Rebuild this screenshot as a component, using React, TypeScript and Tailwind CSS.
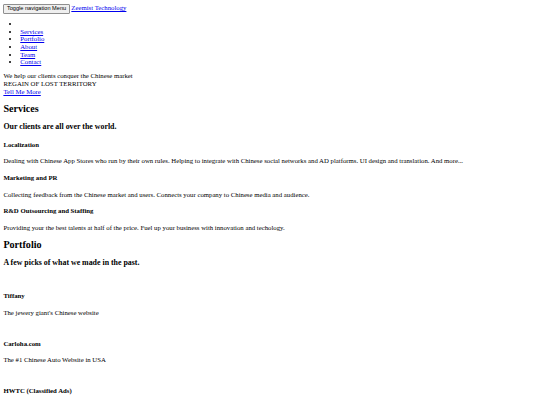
const navLinks = ["Services", "Portfolio", "About", "Team", "Contact"];

const services = [
  {
    title: "Localization",
    text: "Dealing with Chinese App Stores who run by their own rules. Helping to integrate with Chinese social networks and AD platforms. UI design and translation. And more...",
  },
  {
    title: "Marketing and PR",
    text: "Collecting feedback from the Chinese market and users. Connects your company to Chinese media and audience.",
  },
  {
    title: "R&D Outsourcing and Staffing",
    text: "Providing your the best talents at half of the price. Fuel up your business with innovation and techology.",
  },
];

const portfolio = [
  { title: "Tiffany", text: "The jewery giant's Chinese website" },
  { title: "Carloha.com", text: "The #1 Chinese Auto Website in USA" },
  { title: "HWTC (Classified Ads)", text: "" },
];

const linkCls = "text-[#0000ee] underline";

export default function App() {
  return (
    <div className="bg-white text-black font-['Liberation_Serif',serif] text-[6.75px] leading-[1.12] p-[3.375px]">
      {/* nav */}
      <nav>
        <div className="leading-[9px]">
          <button
            type="button"
            className="inline-block align-baseline bg-[#efefef] border border-[#8f8f8f] rounded-[1px] px-[2.5px] py-[0.8px] font-['Liberation_Sans',sans-serif] text-[5.625px] leading-[1.15] text-black"
          >
            Toggle navigation Menu
          </button>{" "}
          <a href="#" className={linkCls}>
            Zeemist Technology
          </a>
        </div>
        <ul className="list-disc pl-[2.5em] my-[1em]">
          <li>
            <a href="#"></a>
          </li>
          {navLinks.map((l) => (
            <li key={l}>
              <a href="#" className={linkCls}>
                {l}
              </a>
            </li>
          ))}
        </ul>
      </nav>

      {/* header */}
      <header>
        <div>We help our clients conquer the Chinese market</div>
        <div>REGAIN OF LOST TERRITORY</div>
        <a href="#" className={linkCls}>
          Tell Me More
        </a>
      </header>

      {/* services */}
      <section>
        <h2 className="text-[1.5em] font-bold my-[0.83em]">Services</h2>
        <h3 className="text-[1.17em] font-bold my-[1em]">Our clients are all over the world.</h3>
        {services.map((s) => (
          <div key={s.title}>
            <h4 className="font-bold my-[1.33em]">{s.title}</h4>
            <p className="my-[1em]">{s.text}</p>
          </div>
        ))}
      </section>

      {/* portfolio */}
      <section>
        <h2 className="text-[1.5em] font-bold my-[0.83em]">Portfolio</h2>
        <h3 className="text-[1.17em] font-bold my-[1em]">A few picks of what we made in the past.</h3>
        {portfolio.map((p) => (
          <div key={p.title}>
            <a href="#" className="block h-[1.12em]"></a>
            <h4 className="font-bold my-[1.33em]">{p.title}</h4>
            {p.text && <p className="my-[1em]">{p.text}</p>}
          </div>
        ))}
      </section>
    </div>
  );
}
